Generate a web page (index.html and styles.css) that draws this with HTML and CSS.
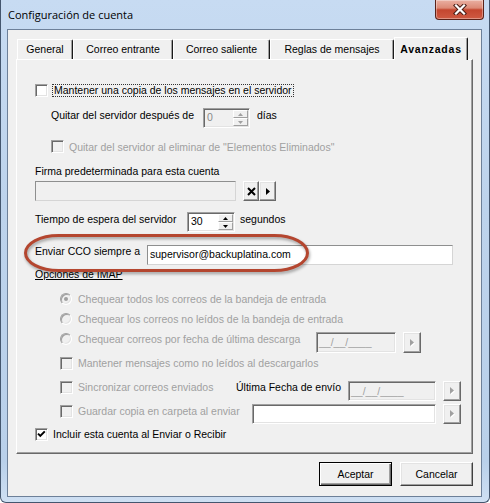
FILE: index.html
```html
<!DOCTYPE html>
<html lang="es">
<head>
<meta charset="utf-8">
<title>Configuración de cuenta</title>
<link rel="stylesheet" href="styles.css">
</head>
<body>
<div class="window">
  <div class="titlebar">
    <span class="title">Configuración de cuenta</span>
    <div class="close">
      <svg width="14" height="11" viewBox="0 0 14 11"><path d="M3 1.5 L11 9.5 M11 1.5 L3 9.5" stroke="#4a1d15" stroke-width="4.2" stroke-linecap="square" fill="none"/><path d="M3 1.5 L11 9.5 M11 1.5 L3 9.5" stroke="#fff" stroke-width="2.2" stroke-linecap="square" fill="none"/></svg>
    </div>
  </div>
  <div class="client">
    <div class="tabs">
      <div class="tab tab-general">General</div>
      <div class="tab tab-entrante">Correo entrante</div>
      <div class="tab tab-saliente">Correo saliente</div>
      <div class="tab tab-reglas">Reglas de mensajes</div>
      <div class="tab tab-avanzadas active">Avanzadas</div>
    </div>
    <div class="panel">
      <div class="row r-copy">
        <span class="cb"></span>
        <span class="lbl focus">Mantener una copia de los mensajes en el servidor</span>
      </div>
      <div class="row r-remove">
        <span class="lbl w-quitar nudge">Quitar del servidor después de</span>
        <div class="spin off">
          <span class="spin-val">0</span>
          <div class="spin-btns">
            <span class="sb"><svg width="5" height="3" viewBox="0 0 5 3"><path d="M2.5 0 L5 3 L0 3Z" fill="#a0a0a0"/></svg></span>
            <span class="sb"><svg width="5" height="3" viewBox="0 0 5 3"><path d="M0 0 L5 0 L2.5 3Z" fill="#a0a0a0"/></svg></span>
          </div>
        </div>
        <span class="lbl after-spin nudge">días</span>
      </div>
      <div class="row r-deleted">
        <span class="cb off indent1"></span>
        <span class="lbl dis nudge">Quitar del servidor al eliminar de "Elementos Eliminados"</span>
      </div>
      <div class="row r-firma-lbl">
        <span class="lbl">Firma predeterminada para esta cuenta</span>
      </div>
      <div class="row r-firma">
        <div class="tbox firma-box"></div>
        <div class="btn-pair">
          <span class="raised mini-x"><svg width="9" height="9" viewBox="0 0 9 9"><path d="M1 1 L8 8 M8 1 L1 8" stroke="#000" stroke-width="2" fill="none"/></svg></span>
          <span class="raised mini-arrow"><svg width="4" height="7" viewBox="0 0 4 7"><path d="M0 0 L4 3.5 L0 7Z" fill="#000"/></svg></span>
        </div>
      </div>
      <div class="row r-timeout">
        <span class="lbl w-tiempo nudge">Tiempo de espera del servidor</span>
        <div class="spin wide">
          <span class="spin-val">30</span>
          <div class="spin-btns">
            <span class="sb"><svg width="5" height="3" viewBox="0 0 5 3"><path d="M2.5 0 L5 3 L0 3Z" fill="#000"/></svg></span>
            <span class="sb"><svg width="5" height="3" viewBox="0 0 5 3"><path d="M0 0 L5 0 L2.5 3Z" fill="#000"/></svg></span>
          </div>
        </div>
        <span class="lbl after-spin2 nudge">segundos</span>
      </div>
      <div class="row r-cco">
        <span class="lbl w-cco">Enviar CCO siempre a</span>
        <div class="tbox cco-box">supervisor@backuplatina.com</div>
      </div>
      <div class="row r-imap">
        <span class="lbl underline">Opciones de IMAP</span>
      </div>
      <div class="row r-radio1">
        <span class="radio"><span class="dot"></span></span>
        <span class="lbl dis after-radio">Chequear todos los correos de la bandeja de entrada</span>
      </div>
      <div class="row r-radio2">
        <span class="radio"></span>
        <span class="lbl dis after-radio">Chequear los correos no leídos de la bandeja de entrada</span>
      </div>
      <div class="row r-radio3">
        <span class="radio nudge"></span>
        <span class="lbl dis after-radio w-fecha nudge">Chequear correos por fecha de última descarga</span>
        <div class="field date date1">__/__/____</div>
        <span class="raised pick"><svg width="5" height="8" viewBox="0 0 5 8"><path d="M1 1 L5 4.5 L1 8Z" fill="#fff"/><path d="M0 0 L4 3.5 L0 7Z" fill="#a0a0a0"/></svg></span>
      </div>
      <div class="row r-unread">
        <span class="cb off indent2"></span>
        <span class="lbl dis after-cb">Mantener mensajes como no leídos al descargarlos</span>
      </div>
      <div class="row r-sync">
        <span class="cb off indent2"></span>
        <span class="lbl dis after-cb w-sync">Sincronizar correos enviados</span>
        <span class="lbl w-ultima">Última Fecha de envío</span>
        <div class="field date date2">__/__/____</div>
        <span class="raised pick"><svg width="5" height="8" viewBox="0 0 5 8"><path d="M1 1 L5 4.5 L1 8Z" fill="#fff"/><path d="M0 0 L4 3.5 L0 7Z" fill="#a0a0a0"/></svg></span>
      </div>
      <div class="row r-save">
        <span class="cb off indent2 nudge"></span>
        <span class="lbl dis after-cb w-save nudge">Guardar copia en carpeta al enviar</span>
        <div class="field white folder"></div>
        <span class="raised pick"><svg width="5" height="8" viewBox="0 0 5 8"><path d="M1 1 L5 4.5 L1 8Z" fill="#fff"/><path d="M0 0 L4 3.5 L0 7Z" fill="#a0a0a0"/></svg></span>
      </div>
      <div class="row r-include">
        <span class="cb"><svg width="11" height="11" viewBox="0 0 11 11"><path d="M2 4.6 L4.3 6.9 L8.8 2.4" stroke="#000" stroke-width="2" fill="none"/></svg></span>
        <span class="lbl after-cb">Incluir esta cuenta al Enviar o Recibir</span>
      </div>
      <svg class="callout" width="287" height="40" viewBox="0 0 287 40"><rect x="1.5" y="1.5" width="282" height="35" rx="33" ry="17.5" fill="none" stroke="#b4462f" stroke-width="3"/></svg>
    </div>
    <div class="actions">
      <button class="btn default">Aceptar</button>
      <button class="btn">Cancelar</button>
    </div>
  </div>
</div>
</body>
</html>
```
FILE: styles.css
```css
* { box-sizing: border-box; }
html, body { margin: 0; padding: 0; }
body {
  width: 490px;
  height: 503px;
  overflow: hidden;
  background: #fff;
  font-family: "Liberation Sans", Arial, sans-serif;
  font-size: 10.5px;
  line-height: 13px;
  color: #000;
}
.window {
  width: 490px;
  height: 503px;
  border: 1px solid #44566e;
  border-top: 0;
  border-radius: 0 0 6px 6px;
  background: linear-gradient(180deg, #c7dbf2 0%, #bdd3ec 40%, #b9d0ea 92%, #cfe0f3 100%);
  display: flex;
  flex-direction: column;
}
.titlebar {
  height: 29px;
  flex: none;
  display: flex;
  align-items: flex-start;
  padding-left: 7px;
}
.title {
  font-family: "Open Sans", "Noto Sans", sans-serif;
  font-size: 11px;
  line-height: 15px;
  margin-top: 7px;
  color: #000;
}
.close {
  margin-left: auto;
  margin-right: 5px;
  width: 49px;
  height: 20px;
  border: 1px solid #5a2219;
  border-top: 0;
  border-radius: 0 0 4px 4px;
  background: linear-gradient(180deg, #eab0a2 0%, #dc8a76 42%, #c4462f 52%, #cf5a42 100%);
  box-shadow: inset 0 0 0 1px rgba(255, 255, 255, 0.35);
  display: flex;
  align-items: center;
  justify-content: center;
}
.client {
  margin: 0 7px 0 6px;
  height: 468px;
  flex: none;
  border: 1px solid #6d8099;
  background: #f0f0f0;
}
/* tabs */
.tabs {
  height: 29px;
  display: flex;
  align-items: flex-end;
  padding-left: 9px;
}
.tab {
  height: 20px;
  padding-top: 3px;
  text-align: center;
  white-space: nowrap;
  border-top: 1px solid #fff;
  border-left: 1px solid #fff;
  border-right: 1px solid #1a1a1a;
  border-top-right-radius: 2px;
  box-shadow: inset -1px 0 #a0a0a0;
}
.tab-general { width: 56px; }
.tab-entrante { width: 100px; }
.tab-saliente { width: 97px; }
.tab-reglas { width: 124px; }
.tab-avanzadas { width: 74px; }
.tab.active {
  height: 23px;
  margin-bottom: -1px;
  padding-top: 5px;
  font-weight: bold;
  letter-spacing: 0.8px;
  background: #f0f0f0;
  position: relative;
  z-index: 2;
}
/* panel */
.panel {
  position: relative;
  margin-left: 8px;
  width: 457px;
  height: 395px;
  padding: 24px 0 0 18px;
  border-top: 1px solid #fff;
  border-left: 1px solid #fff;
  border-right: 1px solid #696969;
  border-bottom: 1px solid #696969;
  box-shadow: inset -1px -1px #a0a0a0;
}
.row { display: flex; align-items: flex-start; }
.r-copy { height: 14px; }
.r-remove { margin-top: 10px; height: 20px; }
.r-deleted { margin-top: 12px; height: 13px; }
.r-firma-lbl { margin-top: 12px; height: 13px; }
.r-firma { margin-top: 3px; height: 20px; }
.r-timeout { margin-top: 11px; height: 20px; }
.r-cco { margin-top: 13px; height: 20px; }
.r-imap { margin-top: 3px; height: 13px; }
.r-radio1 { margin-top: 12px; height: 13px; }
.r-radio2 { margin-top: 7px; height: 13px; }
.r-radio3 { margin-top: 6px; height: 21px; }
.r-unread { margin-top: 4px; height: 13px; }
.r-sync { margin-top: 11px; height: 20px; }
.r-save { margin-top: 3px; height: 20px; }
.r-include { margin-top: 4px; height: 13px; }

.lbl { white-space: nowrap; line-height: 13px; }
.nudge { margin-top: 1px; }
.dis { color: #a0a0a0; }
.underline { text-decoration: underline; }
.focus {
  margin-left: 4px;
  padding: 0 1px;
  line-height: 11px;
  height: 13px;
  border: 1px dotted #333;
}
.w-quitar { margin-left: 16px; width: 152px; }
.w-tiempo { width: 152px; }
.w-cco { width: 112px; }
.w-fecha { width: 238px; }
.w-sync { width: 158px; }
.w-ultima { width: 112px; }
.w-save { width: 174px; }
.after-spin { margin-left: 7px; }
.after-spin2 { margin-left: 5px; }
.after-radio { margin-left: 6px; }
.after-cb { margin-left: 5px; }
.r-deleted .lbl { margin-left: 5px; }
.indent1 { margin-left: 16px; }
.indent2 { margin-left: 25px; }

/* classic controls */
.cb {
  flex: none;
  width: 13px;
  height: 13px;
  border: 1px solid;
  border-color: #a0a0a0 #fff #fff #a0a0a0;
  box-shadow: inset 1px 1px #696969, inset -1px -1px #e3e3e3;
  background: #fff;
}
.cb svg { display: block; }
.cb.off { background: #f0f0f0; }
.radio {
  flex: none;
  margin-left: 25px;
  width: 12px;
  height: 12px;
  border-radius: 50%;
  border: 1px solid;
  border-color: #a0a0a0 #fff #fff #a0a0a0;
  box-shadow: inset 1px 1px #a0a0a0, inset -1px -1px #e3e3e3;
  background: #f0f0f0;
  display: flex;
  align-items: center;
  justify-content: center;
}
.radio .dot {
  width: 4px;
  height: 4px;
  border-radius: 50%;
  background: #a0a0a0;
}
.field {
  flex: none;
  border: 1px solid;
  border-color: #a0a0a0 #fff #fff #a0a0a0;
  box-shadow: inset 1px 1px #696969, inset -1px -1px #e3e3e3;
  background: #f0f0f0;
}
.field.white { background: #fff; }
.date {
  color: #a0a0a0;
  padding: 3px 0 0 2px;
  white-space: nowrap;
}
.date1 { width: 80px; height: 21px; }
.date2 { width: 88px; height: 20px; }
.folder { width: 184px; height: 20px; }
.raised {
  flex: none;
  display: flex;
  align-items: center;
  justify-content: center;
  border: 1px solid;
  border-color: #fff #696969 #696969 #fff;
  box-shadow: inset -1px -1px #a0a0a0, inset 1px 1px #e3e3e3;
  background: #f0f0f0;
}
.pick { width: 18px; height: 20px; margin-left: 7px; }
.r-radio3 .pick { height: 21px; }
.spin {
  flex: none;
  display: flex;
  width: 47px;
  height: 20px;
  border: 1px solid;
  border-color: #a0a0a0 #fff #fff #a0a0a0;
  box-shadow: inset 1px 1px #696969, inset -1px -1px #e3e3e3;
  background: #fff;
}
.spin.off { background: #f0f0f0; }
.spin.off .spin-val { color: #8a8a8a; }
.spin.wide { width: 48px; }
.spin-val { flex: 1; padding: 2px 0 0 3px; }
.spin-btns {
  width: 15px;
  margin: 1px 1px 1px 0;
  display: flex;
  flex-direction: column;
}
.sb {
  flex: 1;
  display: flex;
  align-items: center;
  justify-content: center;
  border: 1px solid;
  border-color: #fff #a0a0a0 #a0a0a0 #fff;
  background: #f0f0f0;
}
.sb svg { display: block; }
.tbox {
  flex: none;
  height: 20px;
  border: 1px solid;
  border-color: #8e8f8f #d5d5d5 #d5d5d5 #8e8f8f;
}
.firma-box { width: 201px; background: #f0f0f0; }
.cco-box { width: 306px; background: #fff; padding: 2px 0 0 2px; white-space: nowrap; }
.btn-pair { display: flex; margin-left: 7px; }
.mini-x { width: 16px; height: 20px; }
.mini-arrow { width: 17px; height: 20px; }
.callout {
  position: absolute;
  left: 7px;
  top: 174px;
  filter: drop-shadow(1px 2px 1.5px rgba(0, 0, 0, 0.35));
}
/* dialog buttons */
.actions {
  margin-top: 8px;
  display: flex;
  justify-content: flex-end;
  gap: 8px;
  padding-right: 8px;
}
.btn {
  width: 73px;
  height: 24px;
  padding: 0;
  font: inherit;
  color: #000;
  background: #f0f0f0;
  border: 1px solid;
  border-color: #fff #404040 #404040 #fff;
  box-shadow: inset -1px -1px #a0a0a0, inset 1px 1px #e3e3e3;
}
.btn.default {
  border-color: #000;
  box-shadow: inset 1px 1px #fff, inset -1px -1px #696969, inset -2px -2px #a0a0a0;
}
```
